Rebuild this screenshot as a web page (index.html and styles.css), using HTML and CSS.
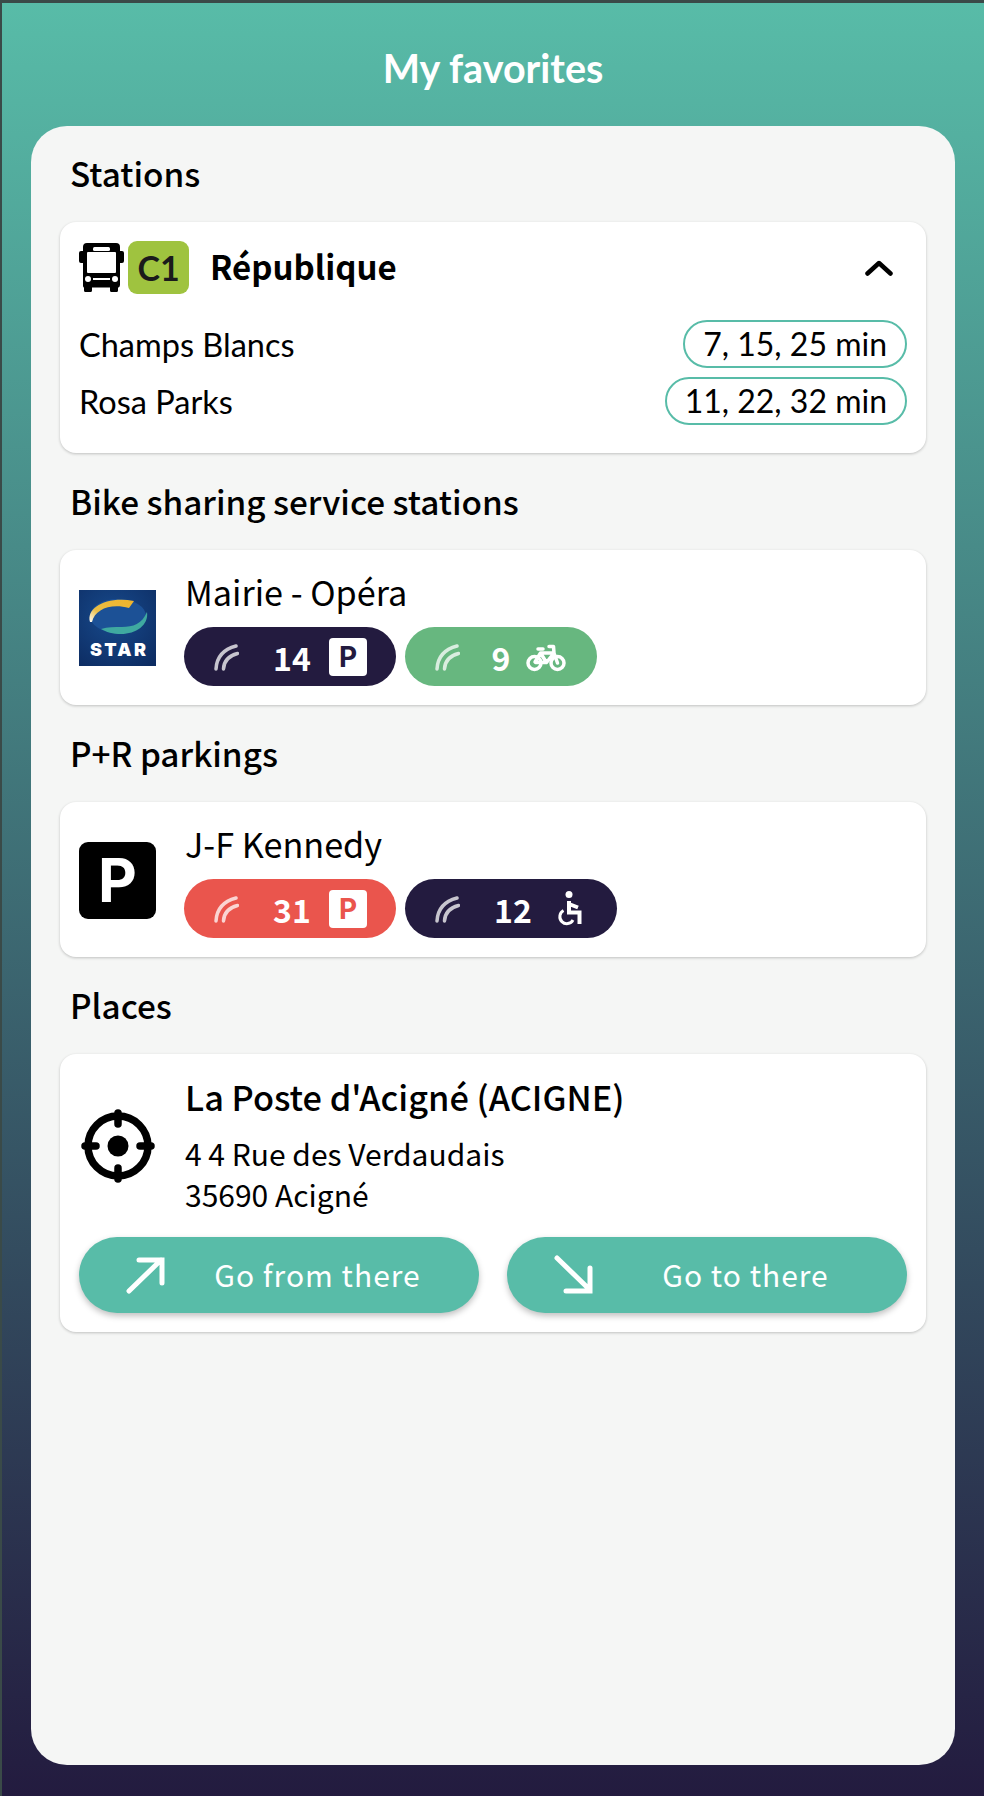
FILE: index.html
```html
<!DOCTYPE html>
<html lang="en">

<head>
    <meta charset="utf-8">
    <title>My favorites</title>
    <link rel="stylesheet" href="styles.css">
</head>

<body>
    <div class="screen">
        <h1 class="page-title">My favorites</h1>
        <div class="panel">
            <h2 class="section-title">Stations</h2>
            <div class="card card-station">
                <div class="station-head">
                    <svg class="bus-icon" viewBox="0 0 45 49">
                        <path fill="#000" d="M8 0h29a4 4 0 0 1 4 4v4h2a2 2 0 0 1 2 2v8a2 2 0 0 1-2 2h-2v22a3 3 0 0 1-2 2.800v2.700a1.500 1.500 0 0 1-1.500 1.500h-5a1.500 1.500 0 0 1-1.500-1.500v-3H13v3a1.500 1.500 0 0 1-1.500 1.500h-5A1.500 1.500 0 0 1 5 47.500v-2.700A3 3 0 0 1 4 42V20H2a2 2 0 0 1-2-2v-8a2 2 0 0 1 2-2h2V4a4 4 0 0 1 4-4z" />
                        <path fill="#fff" d="M9 9h27a1 1 0 0 1 1 1v19a1 1 0 0 1-1 1H9a1 1 0 0 1-1-1V10a1 1 0 0 1 1-1z" />
                        <rect fill="#fff" x="14" y="4" width="17" height="4" rx="1.500" />
                        <circle fill="#fff" cx="9" cy="36" r="3" />
                        <circle fill="#fff" cx="36" cy="36" r="3" />
                        <rect fill="#fff" x="14" y="35" width="17" height="2" />
                    </svg>
                    <span class="line-badge">C1</span>
                    <span class="station-name">République</span>
                    <svg class="chevron" viewBox="0 0 28 16">
                        <path d="M2.500 13.500 14 3l11.500 10.500" />
                    </svg>
                </div>
                <div class="direction">
                    <span>Champs Blancs</span>
                    <span class="times">7, 15, 25 min</span>
                </div>
                <div class="direction">
                    <span>Rosa Parks</span>
                    <span class="times">11, 22, 32 min</span>
                </div>
            </div>

            <h2 class="section-title">Bike sharing service stations</h2>
            <div class="card card-spot">
                <svg class="star-logo" viewBox="0 0 77 76">
                    <defs>
                        <radialGradient id="starBg" cx="0.45" cy="0.35" r="0.8">
                            <stop offset="0" stop-color="#174a8c" />
                            <stop offset="1" stop-color="#0d2c62" />
                        </radialGradient>
                        <linearGradient id="starGold" x1="0" y1="1" x2="1" y2="0.300">
                            <stop offset="0" stop-color="#ffffff" />
                            <stop offset="0.35" stop-color="#e9bd45" />
                            <stop offset="1" stop-color="#efb52e" />
                        </linearGradient>
                    </defs>
                    <rect width="77" height="76" fill="url(#starBg)" />
                    <ellipse cx="39" cy="26" rx="28" ry="17" fill="#1c5196" />
                    <path fill="url(#starGold)" d="M11 32C7 18 27 6 55 11l-5 7C32 13 16 19 13 32z" />
                    <path fill="#3fa9a0" d="M68 22c2 13-11 22-26 22-8 0-15-2-20-5 7-2 13-2 21-2 11 0 20-3 25-15z" />
                    <text class="star-text" x="11" y="66" textLength="56" lengthAdjust="spacing">STAR</text>
                </svg>
                <div class="spot-body">
                    <div class="spot-name">Mairie - Opéra</div>
                    <div class="pills">
                        <div class="pill pill-dark">
                            <svg class="wifi" viewBox="0 0 26 28"><path d="M3 26Q4 8 23 3M10.500 26Q11 14 24.500 10.500" /></svg>
                            <span class="pill-num">14</span>
                            <span class="p-badge p-badge-dark">P</span>
                        </div>
                        <div class="pill pill-green pill-short">
                            <svg class="wifi" viewBox="0 0 26 28"><path d="M3 26Q4 8 23 3M10.500 26Q11 14 24.500 10.500" /></svg>
                            <span class="pill-num">9</span>
                            <svg class="bike" viewBox="0 0 40 30">
                                <circle cx="8.500" cy="21" r="6.500" />
                                <circle cx="31.500" cy="21" r="6.500" />
                                <path d="M9 20 14.500 11h13.500l3.500 10M14.500 11l6 9.500h-11M20.500 20.500 28 11M23 4.500h4.500L28 11M12 7h5" />
                            </svg>
                        </div>
                    </div>
                </div>
            </div>

            <h2 class="section-title">P+R parkings</h2>
            <div class="card card-spot">
                <div class="park-icon">P</div>
                <div class="spot-body">
                    <div class="spot-name">J-F Kennedy</div>
                    <div class="pills">
                        <div class="pill pill-red">
                            <svg class="wifi" viewBox="0 0 26 28"><path d="M3 26Q4 8 23 3M10.500 26Q11 14 24.500 10.500" /></svg>
                            <span class="pill-num">31</span>
                            <span class="p-badge p-badge-red">P</span>
                        </div>
                        <div class="pill pill-dark">
                            <svg class="wifi" viewBox="0 0 26 28"><path d="M3 26Q4 8 23 3M10.500 26Q11 14 24.500 10.500" /></svg>
                            <span class="pill-num">12</span>
                            <svg class="wheelchair" viewBox="0 0 26 36">
                                <circle class="wheelchair-head" cx="13" cy="3.500" r="3.500" />
                                <path class="wheelchair-body" d="M13 10v11.500h10.500V33M13 13l9 3.500" />
                                <path d="M7.500 19.500a7 7 0 1 0 9.500 9.500" />
                            </svg>
                        </div>
                    </div>
                </div>
            </div>

            <h2 class="section-title">Places</h2>
            <div class="card card-place">
                <div class="place-top">
                    <svg class="crosshair" viewBox="0 0 74 74">
                        <circle class="crosshair-ring" cx="37" cy="37" r="30" />
                        <circle class="crosshair-dot" cx="37" cy="37" r="10.500" />
                        <path class="crosshair-ticks" d="M37 4v11M37 59v11M4 37h11M59 37h11" />
                    </svg>
                    <div class="place-body">
                        <div class="place-name">La Poste d'Acigné (ACIGNE)</div>
                        <div class="place-address">4 4 Rue des Verdaudais</div>
                        <div class="place-address">35690 Acigné</div>
                    </div>
                </div>
                <div class="place-actions">
                    <button class="go-btn">
                        <svg class="go-arrow" viewBox="0 0 40 40"><path d="M3 36 35 5M13 5h23v23" /></svg>
                        <span class="go-label">Go from there</span>
                    </button>
                    <button class="go-btn">
                        <svg class="go-arrow" viewBox="0 0 40 40"><path d="M3 3 35 34M12 36h24V13" /></svg>
                        <span class="go-label">Go to there</span>
                    </button>
                </div>
            </div>
        </div>
    </div>
</body>

</html>
```
FILE: styles.css
```css
* {
    box-sizing: border-box;
}
html, body {
    margin: 0;
    padding: 0;
}
body {
    font-family: "Noto Sans CJK JP", "Noto Sans", sans-serif;
    color: #000;
}
.screen {
    width: 984px;
    height: 1796px;
    display: flex;
    flex-direction: column;
    padding: 0 29px 31px 31px;
    background: linear-gradient(#58bca8, #231b3f);
    box-shadow: inset 2px 3px 0 #3a4a48;
}
.page-title {
    height: 126px;
    margin: 0;
    padding-top: 3px;
    line-height: 130px;
    font-family: Lato, sans-serif;
    font-size: 39.500px;
    font-weight: 700;
    text-align: center;
    color: #fff;
}
.panel {
    flex: 1;
    padding: 24px 29px 0;
    background: #f5f6f5;
    border-radius: 36px;
}
.section-title {
    margin: 0 0 24px;
    padding-left: 10px;
    height: 48px;
    line-height: 45px;
    font-size: 33.300px;
    font-weight: 500;
}
.card {
    margin-bottom: 25px;
    background: #fff;
    border-radius: 16px;
    box-shadow: 0 1px 3px rgba(0, 0, 0, 0.22);
}

/* stations */
.card-station {
    height: 231px;
    padding: 19px 19px 0;
}
.station-head {
    display: flex;
    align-items: center;
    height: 53px;
    margin-bottom: 26px;
}
.bus-icon {
    width: 45px;
    height: 49px;
}
.line-badge {
    width: 61px;
    height: 53px;
    margin-left: 4px;
    border-radius: 9px;
    background: #9fc33f;
    font-family: Lato, sans-serif;
    font-size: 34px;
    font-weight: 700;
    line-height: 53px;
    text-align: center;
    color: #1b1b1b;
}
.station-name {
    flex: 1;
    margin-left: 21px;
    padding-bottom: 3px;
    font-size: 33px;
    font-weight: 600;
}
.chevron {
    width: 28px;
    height: 16px;
    margin-right: 14px;
    fill: none;
    stroke: #000;
    stroke-width: 4.500;
    stroke-linecap: round;
    stroke-linejoin: round;
}
.direction {
    display: flex;
    justify-content: space-between;
    align-items: center;
    height: 48px;
    margin-bottom: 9px;
    font-family: Lato, sans-serif;
    font-size: 32.500px;
}
.times {
    height: 48px;
    padding: 0 18px;
    border: 2px solid #58bca8;
    border-radius: 24px;
    font-size: 32px;
    line-height: 44px;
}

/* bike stations and parkings */
.card-spot {
    display: flex;
    align-items: center;
    height: 155px;
    padding: 0 19px;
}
.star-logo {
    flex: none;
    width: 77px;
    height: 76px;
}
.star-text {
    font-family: Inter, sans-serif;
    font-size: 18px;
    font-weight: 900;
    fill: #fff;
}
.park-icon {
    flex: none;
    width: 77px;
    height: 77px;
    margin-top: 1px;
    border-radius: 9px;
    background: #000;
    font-family: Inter, sans-serif;
    font-size: 60px;
    font-weight: 700;
    line-height: 77px;
    text-align: center;
    color: #fff;
}
.spot-body {
    margin: 1px 0 0 28px;
}
.spot-name {
    height: 42px;
    padding-left: 1px;
    line-height: 42px;
    margin-bottom: 15px;
    font-size: 34.200px;
}
.pills {
    display: flex;
    gap: 9px;
}
.pill {
    display: flex;
    align-items: center;
    width: 212px;
    height: 59px;
    padding-left: 29px;
    border-radius: 30px;
    color: #fff;
}
.pill-short {
    width: 192px;
}
.pill-dark {
    background: #231b3f;
}
.pill-green {
    background: #67b77f;
}
.pill-red {
    background: #ea554d;
}
.wifi {
    flex: none;
    width: 26px;
    height: 28px;
    fill: none;
    stroke: #fff;
    stroke-opacity: 0.75;
    stroke-width: 3.500;
    stroke-linecap: round;
}
.pill-num {
    width: 66px;
    margin-left: 20px;
    font-size: 32px;
    font-weight: 600;
    text-align: center;
}
.pill-short .pill-num {
    width: 42px;
}
.p-badge {
    width: 38px;
    height: 38px;
    margin-left: 4px;
    border-radius: 4px;
    background: #fff;
    font-family: Inter, sans-serif;
    font-size: 28px;
    font-weight: 700;
    line-height: 38px;
    text-align: center;
}
.p-badge-dark {
    color: #231b3f;
}
.p-badge-red {
    color: #ea554d;
}
.bike {
    width: 40px;
    height: 30px;
    margin-left: 4px;
    fill: none;
    stroke: #fff;
    stroke-width: 3.500;
    stroke-linejoin: round;
    stroke-linecap: round;
}
.wheelchair {
    width: 26px;
    height: 36px;
    margin-left: 10px;
    fill: none;
    stroke: #fff;
    stroke-width: 3;
}
.wheelchair-head {
    fill: #fff;
    stroke: none;
}
.wheelchair-body {
    stroke-width: 4;
}

/* places */
.card-place {
    height: 278px;
    padding: 0 19px;
}
.place-top {
    display: flex;
    align-items: center;
    height: 183px;
}
.crosshair {
    flex: none;
    width: 74px;
    height: 74px;
    margin: 0 0 0 2px;
}
.crosshair-ring {
    fill: none;
    stroke: #000;
    stroke-width: 7.500;
}
.crosshair-dot {
    fill: #000;
}
.crosshair-ticks {
    stroke: #000;
    stroke-width: 7.500;
    stroke-linecap: round;
}
.place-body {
    margin: 0 0 3px 30px;
}
.place-name {
    height: 46px;
    line-height: 46px;
    margin-bottom: 14px;
    font-size: 34.300px;
    font-weight: 500;
}
.place-address {
    height: 41px;
    line-height: 41px;
    font-size: 30px;
}
.place-actions {
    display: flex;
    gap: 28px;
}
.go-btn {
    flex: 1;
    display: flex;
    align-items: center;
    height: 76px;
    padding: 0 10px 0 47px;
    border: none;
    border-radius: 38px;
    background: #58bca8;
    box-shadow: 0 3px 6px rgba(0, 0, 0, 0.25);
    color: #fff;
    font-family: inherit;
}
.go-arrow {
    flex: none;
    width: 40px;
    height: 40px;
    fill: none;
    stroke: #fff;
    stroke-width: 5;
    stroke-linecap: round;
}
.go-label {
    flex: 1;
    padding-bottom: 2px;
    font-size: 30px;
    letter-spacing: 1px;
    text-align: center;
}
```
